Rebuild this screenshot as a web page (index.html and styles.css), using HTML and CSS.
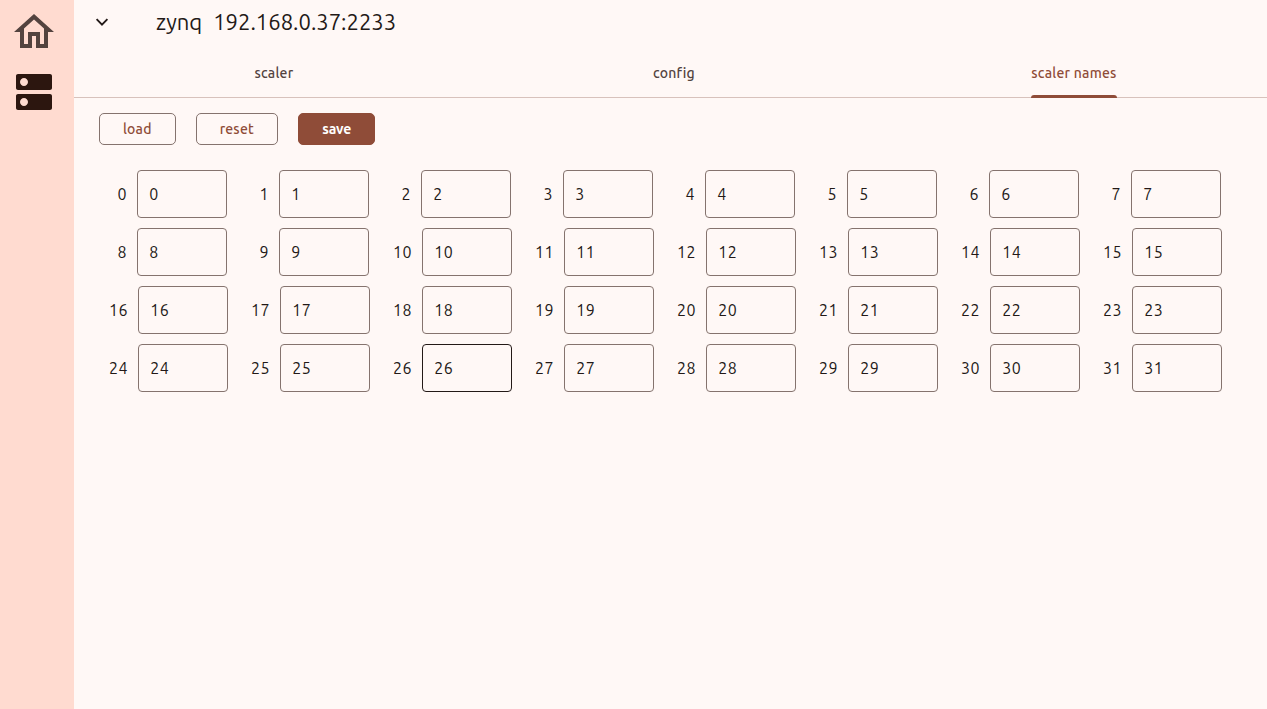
FILE: index.html
```html
<!DOCTYPE html>
<html lang="en">
<head>
<meta charset="utf-8">
<title>zynq scaler names</title>
<link rel="stylesheet" href="styles.css">
</head>
<body>
<nav class="rail">
  <svg class="rail-icon home" viewBox="0 0 24 24"><path d="M12 5.69l5 4.5V18h-2v-6H9v6H7v-7.81l5-4.5M12 3L2 12h3v8h6v-6h2v6h6v-8h3L12 3z"/></svg>
  <svg class="rail-icon device" viewBox="0 0 24 24"><path d="M20 13H4c-.55 0-1 .45-1 1v6c0 .55.45 1 1 1h16c.55 0 1-.45 1-1v-6c0-.55-.45-1-1-1zM7 19c-1.1 0-2-.9-2-2s.9-2 2-2 2 .9 2 2-.9 2-2 2zM20 3H4c-.55 0-1 .45-1 1v6c0 .55.45 1 1 1h16c.55 0 1-.45 1-1V4c0-.55-.45-1-1-1zM7 9c-1.1 0-2-.9-2-2s.9-2 2-2 2 .9 2 2-.9 2-2 2z"/></svg>
</nav>
<main class="main">
  <header class="header">
    <svg class="chevron" viewBox="0 0 16 16"><path d="M2.6 5.2L8 10.6l5.4-5.4"/></svg>
    <h1 class="title"><span class="name">zynq</span><span class="address">192.168.0.37:2233</span></h1>
  </header>
  <div class="tabs">
    <div class="tab"><span class="tab-label">scaler</span></div>
    <div class="tab"><span class="tab-label">config</span></div>
    <div class="tab active"><span class="tab-label">scaler names</span></div>
  </div>
  <div class="actions">
    <button class="button load">load</button>
    <button class="button reset">reset</button>
    <button class="button save">save</button>
  </div>
  <div class="grid">
    <div class="cell one"><span class="label">0</span><div class="field">0</div></div>
    <div class="cell one"><span class="label">1</span><div class="field">1</div></div>
    <div class="cell one"><span class="label">2</span><div class="field">2</div></div>
    <div class="cell one"><span class="label">3</span><div class="field">3</div></div>
    <div class="cell one"><span class="label">4</span><div class="field">4</div></div>
    <div class="cell one"><span class="label">5</span><div class="field">5</div></div>
    <div class="cell one"><span class="label">6</span><div class="field">6</div></div>
    <div class="cell one"><span class="label">7</span><div class="field">7</div></div>
    <div class="cell one"><span class="label">8</span><div class="field">8</div></div>
    <div class="cell one"><span class="label">9</span><div class="field">9</div></div>
    <div class="cell"><span class="label">10</span><div class="field">10</div></div>
    <div class="cell"><span class="label">11</span><div class="field">11</div></div>
    <div class="cell"><span class="label">12</span><div class="field">12</div></div>
    <div class="cell"><span class="label">13</span><div class="field">13</div></div>
    <div class="cell"><span class="label">14</span><div class="field">14</div></div>
    <div class="cell"><span class="label">15</span><div class="field">15</div></div>
    <div class="cell"><span class="label">16</span><div class="field">16</div></div>
    <div class="cell"><span class="label">17</span><div class="field">17</div></div>
    <div class="cell"><span class="label">18</span><div class="field">18</div></div>
    <div class="cell"><span class="label">19</span><div class="field">19</div></div>
    <div class="cell"><span class="label">20</span><div class="field">20</div></div>
    <div class="cell"><span class="label">21</span><div class="field">21</div></div>
    <div class="cell"><span class="label">22</span><div class="field">22</div></div>
    <div class="cell"><span class="label">23</span><div class="field">23</div></div>
    <div class="cell"><span class="label">24</span><div class="field">24</div></div>
    <div class="cell"><span class="label">25</span><div class="field">25</div></div>
    <div class="cell"><span class="label">26</span><div class="field hovered">26</div></div>
    <div class="cell"><span class="label">27</span><div class="field">27</div></div>
    <div class="cell"><span class="label">28</span><div class="field">28</div></div>
    <div class="cell"><span class="label">29</span><div class="field">29</div></div>
    <div class="cell"><span class="label">30</span><div class="field">30</div></div>
    <div class="cell"><span class="label">31</span><div class="field">31</div></div>
  </div>
</main>
</body>
</html>
```
FILE: styles.css
```css
* { box-sizing: border-box; }
body {
  margin: 0;
  height: 100vh;
  display: flex;
  overflow: hidden;
  background: #fff8f6;
  color: #231917;
  font-family: Ubuntu, "Noto Sans", sans-serif;
}
.rail {
  width: 74px;
  flex: none;
  padding: 8px 0 0 10px;
  display: flex;
  flex-direction: column;
  gap: 12px;
  background: #ffdbd0;
}
.rail-icon { width: 48px; height: 48px; }
.home { fill: #53433f; }
.device { fill: #2c160f; }
.main { flex: 1; min-width: 0; }
.header {
  height: 44px;
  padding-left: 20px;
  display: flex;
  align-items: center;
}
.chevron {
  width: 16px;
  height: 16px;
  margin-right: 46px;
  fill: none;
  stroke: #231917;
  stroke-width: 1.9;
}
.title {
  margin: 0;
  display: flex;
  gap: 11px;
  font-size: 22px;
  font-weight: 400;
  line-height: 28px;
}
.tabs {
  height: 54px;
  display: grid;
  grid-template-columns: repeat(3, 400px);
  border-bottom: 1px solid #d8c2bc;
}
.tab {
  height: 54px;
  display: flex;
  justify-content: center;
  font-size: 14px;
  font-weight: 500;
  line-height: 20px;
  letter-spacing: 0.24px;
  color: #53433f;
}
.tab-label {
  padding-top: 19px;
  display: flex;
  flex-direction: column;
  justify-content: space-between;
  white-space: nowrap;
}
.active .tab-label { color: #8f4c38; }
.active .tab-label::after {
  content: "";
  height: 3px;
  background: #8f4c38;
  border-radius: 3px 3px 0 0;
}
.actions {
  display: flex;
  gap: 20px;
  padding: 15px 0 0 25px;
}
.button {
  height: 32px;
  padding: 0;
  border: 1px solid #85736e;
  border-radius: 5px;
  background: none;
  color: #8f4c38;
  font: 500 14px/20px Ubuntu, "Noto Sans", sans-serif;
  letter-spacing: 0.2px;
}
.load { width: 76.6px; }
.reset { width: 82.4px; }
.save {
  width: 77.4px;
  border-color: #8f4c38;
  background: #8f4c38;
  color: #fff;
  font-weight: 700;
  letter-spacing: -0.1px;
}
.grid {
  padding: 25px 0 0 25px;
  display: grid;
  grid-template-columns: repeat(8, 142px);
  grid-auto-rows: 48px;
  row-gap: 10px;
  font-size: 16px;
  line-height: 24px;
  letter-spacing: 0.5px;
}
.cell { display: flex; align-items: center; gap: 10px; }
.label { width: 29px; text-align: right; }
.one .label { width: 28px; }
.field {
  width: 90px;
  height: 48px;
  padding: 11px 11.3px;
  border: 1px solid #85736e;
  border-radius: 4px;
}
.hovered { border-color: #231917; }
```
